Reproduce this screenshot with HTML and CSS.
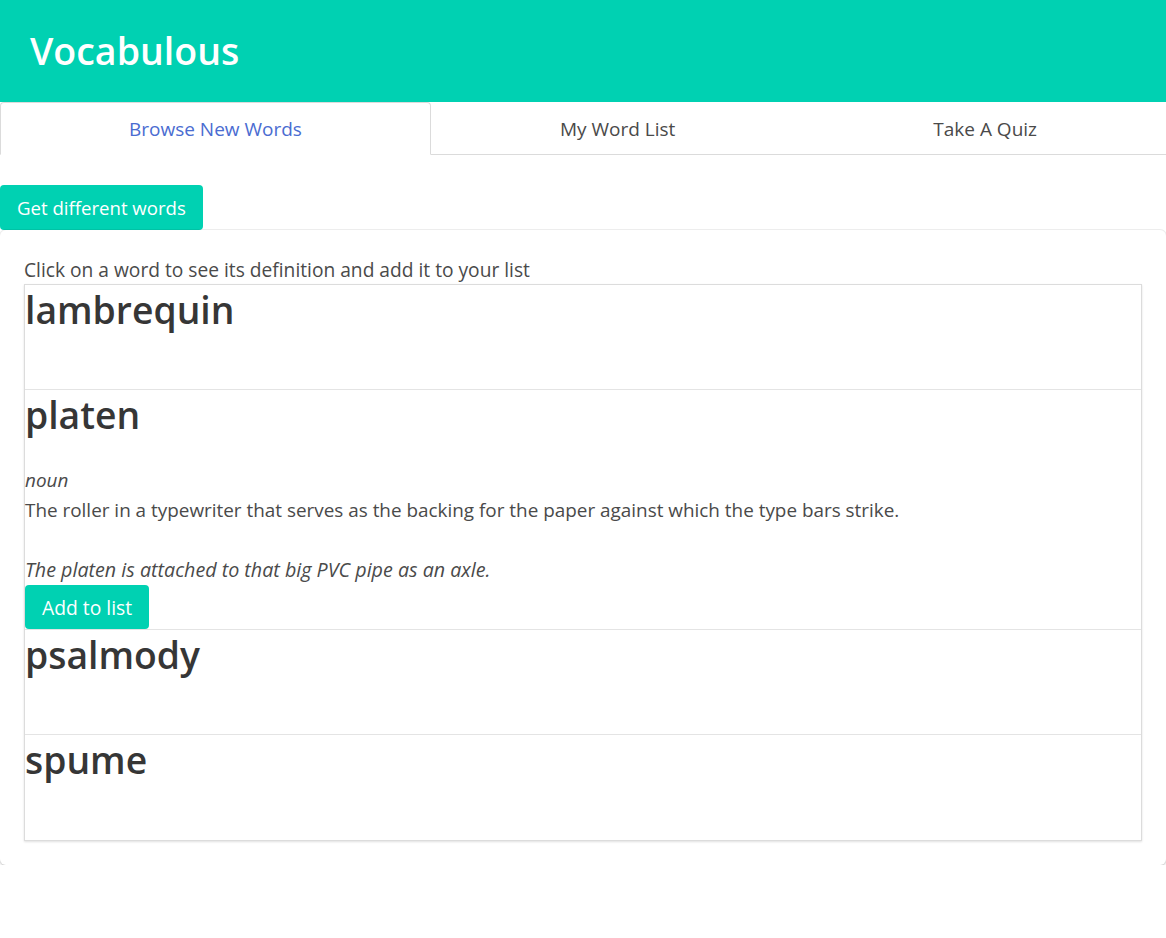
FILE: index.html
```html
<!DOCTYPE html>
<html lang="en">
<head>
<meta charset="utf-8">
<title>Vocabulous</title>
<link rel="stylesheet" href="styles.css">
</head>
<body>
<header class="hero">
  <h1 class="brand">Vocabulous</h1>
</header>
<nav class="tabs">
  <ul class="tab-list">
    <li class="tab is-active"><a class="tab-link">Browse New Words</a></li>
    <li class="tab"><a class="tab-link">My Word List</a></li>
    <li class="tab"><a class="tab-link">Take A Quiz</a></li>
  </ul>
</nav>
<main class="content">
  <button class="btn btn-refresh">Get different words</button>
  <section class="box">
    <p class="intro">Click on a word to see its definition and add it to your list</p>
    <div class="word-list">
      <div class="word">
        <h2 class="word-title">lambrequin</h2>
      </div>
      <div class="word">
        <h2 class="word-title">platen</h2>
        <div class="details">
          <p class="pos">noun</p>
          <p class="def">The roller in a typewriter that serves as the backing for the paper against which the type bars strike.</p>
          <p class="blank"></p>
          <p class="example">The platen is attached to that big PVC pipe as an axle.</p>
          <button class="btn btn-add">Add to list</button>
        </div>
      </div>
      <div class="word">
        <h2 class="word-title">psalmody</h2>
      </div>
      <div class="word">
        <h2 class="word-title">spume</h2>
      </div>
    </div>
  </section>
</main>
</body>
</html>
```
FILE: styles.css
```css
* { box-sizing: border-box; }

body {
  margin: 0;
  font-family: "Open Sans", "Noto Sans", sans-serif;
  color: #4a4a4a;
  background: #ffffff;
}

.hero {
  background: #00d1b2;
  height: 102px;
  padding-left: 30px;
  display: flex;
  align-items: center;
}

.brand {
  margin: 0;
  color: #ffffff;
  font-size: 37.5px;
  font-weight: 600;
  line-height: 1;
}

.tab-list {
  display: flex;
  list-style: none;
  margin: 0;
  padding: 0;
  border-bottom: 1px solid #dbdbdb;
}

.tab {
  flex: 1 1 auto;
  height: 53px;
  margin-bottom: -1px;
  border: 1px solid transparent;
  border-radius: 4px 4px 0 0;
}

.tab.is-active {
  border-color: #dbdbdb;
  border-bottom-color: #ffffff;
  background: #ffffff;
}

.tab-link {
  display: flex;
  height: 100%;
  align-items: center;
  justify-content: center;
  padding: 0 1em;
  font-size: 19px;
  color: #4a4a4a;
}

.tab.is-active .tab-link {
  color: #4a6cd1;
}

.content {
  padding-top: 30px;
}

.btn {
  display: block;
  border: none;
  border-radius: 4px;
  background: #00d1b2;
  color: #ffffff;
  font-family: inherit;
  font-size: 18.6px;
  padding: 0 17px;
  cursor: pointer;
}

.btn-refresh {
  height: 45px;
}

.btn-add {
  height: 44px;
  font-size: 19.3px;
}

.box {
  background: #ffffff;
  border-radius: 6px;
  box-shadow: 0 2px 3px rgba(10, 10, 10, 0.12), 0 0 0 1px rgba(10, 10, 10, 0.07);
  padding: 24px;
}

.intro {
  margin: 0;
  font-size: 19.2px;
  line-height: 30px;
  padding-top: 1px;
  height: 30px;
}

.word-list {
  border: 1px solid #dcdcdc;
  box-shadow: 0 1px 2px rgba(10, 10, 10, 0.12);
}

.word {
  box-sizing: content-box;
  min-height: 104px;
}

.word + .word {
  border-top: 1px solid #e4e4e4;
}

.word:last-child {
  min-height: 105px;
}

.word-title {
  margin: 0 0 30px;
  padding-top: 3px;
  height: 45px;
  font-size: 37.3px;
  line-height: 44px;
  font-weight: 600;
  color: #363636;
}

.details p {
  margin: 0;
  font-size: 18.9px;
  line-height: 30px;
}

.details .blank {
  height: 30px;
}

.pos,
.example {
  font-style: italic;
}

.details .example {
  font-size: 19.7px;
}
```
